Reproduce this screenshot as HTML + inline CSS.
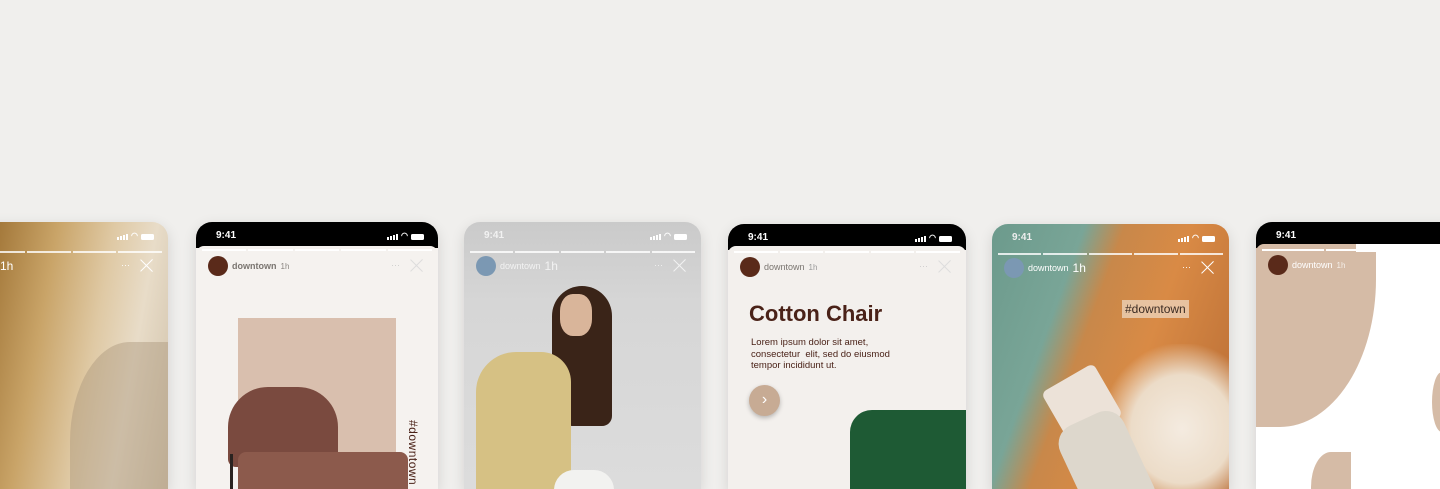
<!DOCTYPE html>
<html style="width:1440px;height:489px;overflow:hidden"><head><meta charset="utf-8"><style>
*{margin:0;padding:0;box-sizing:border-box}
body{width:1440px;height:489px;overflow:hidden;background:#f0efed;font-family:"Liberation Sans",sans-serif;position:relative}
.card{position:absolute;top:222px;height:267px;border-radius:16px 16px 0 0;overflow:hidden;box-shadow:0 4px 14px rgba(0,0,0,.12)}
.sb{position:absolute;left:0;right:0;top:0;height:25px;color:#fff;font-size:10px;font-weight:bold}
.sb .t{position:absolute;left:20px;top:8px}
.sb .ic{position:absolute;right:14px;top:9px;display:flex;gap:3px;align-items:flex-end}
.bars{display:flex;gap:1px;align-items:flex-end}.bars i{display:block;width:2px;background:#fff}
.bat{width:13px;height:6px;background:#fff;border-radius:1.5px}
.prog{position:absolute;left:6px;right:6px;top:29px;display:flex;gap:2px}.prog i{flex:1;height:1.5px;background:rgba(255,255,255,.8)}
.hdr{position:absolute;left:12px;right:14px;top:34px;height:20px;display:flex;align-items:center;font-size:9px}
.av{width:20px;height:20px;border-radius:50%;margin-right:4px}
.x{position:absolute;right:0;top:2px;width:14px;height:14px}
.x:before,.x:after{content:"";position:absolute;left:6px;top:-1px;width:1.3px;height:17px;background:currentColor;transform:rotate(45deg)}
.x:after{transform:rotate(-45deg)}
.dots{position:absolute;right:24px;top:4px;font-size:9px}
</style></head><body>

<div class="card" style="left:-70px;width:238px;background:linear-gradient(100deg,#6b4a22 0%,#a57a3c 25%,#c9a468 45%,#dfc9a4 65%,#e8dcc8 80%,#cfc0a8 100%)">
 <div style="position:absolute;left:140px;top:120px;width:120px;height:200px;background:rgba(170,150,125,.45);border-radius:50% 0 0 0"></div>
 <div class="sb"><div class="ic"><div class="bars"><i style="height:3px"></i><i style="height:4px"></i><i style="height:5px"></i><i style="height:6px"></i></div><span style="font-size:8px">◠</span><div class="bat"></div></div></div>
 <div class="prog"><i></i><i></i><i></i><i></i><i></i></div>
 <div class="hdr" style="color:#fff"><span style="margin-left:58px;font-size:12px">1h</span><span class="dots">···</span><span class="x"></span></div>
</div>

<div class="card" style="left:196px;width:242px;background:#f5f2ef">
 <div class="sb" style="background:#000;height:26px"><span class="t">9:41</span><div class="ic"><div class="bars"><i style="height:3px"></i><i style="height:4px"></i><i style="height:5px"></i><i style="height:6px"></i></div><span style="font-size:8px">◠</span><div class="bat"></div></div></div>
 <div style="position:absolute;left:0;right:0;top:24px;height:10px;background:#f5f2ef;border-radius:8px 8px 0 0"></div>
 <div class="prog" style="top:27px"><i style="background:#fff"></i><i style="background:#fff"></i><i style="background:#fff"></i><i style="background:#fff"></i><i style="background:#fff"></i></div>
 <div class="hdr" style="color:#8a8580;top:34px"><div class="av" style="background:#5a2a1a"></div><span style="font-weight:bold;color:#7a7570">downtown</span><span style="margin-left:4px;font-size:8px">1h</span><span class="dots" style="color:#ccc">···</span><span class="x" style="color:#ddd"></span></div>
 <div style="position:absolute;left:42px;top:96px;width:158px;height:200px;background:#d9bfae"></div>
 <div style="position:absolute;left:32px;top:165px;width:110px;height:80px;background:#7a4a3f;border-radius:40px 40px 8px 8px"></div>
 <div style="position:absolute;left:42px;top:230px;width:170px;height:70px;background:#8c5a4c;border-radius:8px"></div>
 <div style="position:absolute;left:34px;top:232px;width:3px;height:60px;background:#2a2320"></div>
 <div style="position:absolute;left:224px;top:198px;transform:rotate(90deg);transform-origin:left top;font-size:12px;color:#4a2218;white-space:nowrap;letter-spacing:.5px">#downtown</div>
</div>

<div class="card" style="left:464px;width:237px;background:linear-gradient(180deg,#cacaca 0%,#d6d6d6 30%,#dcdcdc 100%)">
 <div class="sb"><span class="t" style="color:#f2f2f2">9:41</span><div class="ic"><div class="bars"><i style="height:3px"></i><i style="height:4px"></i><i style="height:5px"></i><i style="height:6px"></i></div><span style="font-size:8px">◠</span><div class="bat"></div></div></div>
 <div class="prog"><i></i><i></i><i></i><i></i><i></i></div>
 <div class="hdr" style="color:#f2f2f2"><div class="av" style="background:#7b98b3"></div><span>downtown</span><span style="margin-left:4px;font-size:12px">1h</span><span class="dots">···</span><span class="x"></span></div>
 <div style="position:absolute;left:88px;top:64px;width:60px;height:140px;background:#3a2418;border-radius:30px 30px 10px 20px"></div>
 <div style="position:absolute;left:96px;top:72px;width:32px;height:42px;background:#d9b59a;border-radius:40%"></div>
 <div style="position:absolute;left:12px;top:130px;width:95px;height:170px;background:#d6c184;border-radius:40px 30px 0 0"></div>
 <div style="position:absolute;left:90px;top:248px;width:60px;height:40px;background:#f2f2f0;border-radius:20px"></div>
</div>

<div class="card" style="left:728px;top:224px;width:238px;background:#f3f0ed">
 <div class="sb" style="background:#000;height:26px"><span class="t">9:41</span><div class="ic"><div class="bars"><i style="height:3px"></i><i style="height:4px"></i><i style="height:5px"></i><i style="height:6px"></i></div><span style="font-size:8px">◠</span><div class="bat"></div></div></div>
 <div style="position:absolute;left:0;right:0;top:22px;height:10px;background:#f3f0ed;border-radius:8px 8px 0 0"></div>
 <div class="prog" style="top:27px"><i style="background:#fff"></i><i style="background:#fff"></i><i style="background:#fff"></i><i style="background:#fff"></i><i style="background:#fff"></i></div>
 <div class="hdr" style="top:33px"><div class="av" style="background:#5a2a1a"></div><span style="color:#7a7570">downtown</span><span style="margin-left:4px;font-size:8px;color:#999">1h</span><span class="dots" style="color:#ccc">···</span><span class="x" style="color:#ddd"></span></div>
 <div style="position:absolute;left:21px;top:77px;font-size:22px;font-weight:bold;color:#4a2218">Cotton Chair</div>
 <div style="position:absolute;left:23px;top:113px;font-size:9.5px;line-height:11.5px;color:#4a2218">Lorem ipsum dolor sit amet,<br>consectetur&nbsp; elit, sed do eiusmod<br>tempor incididunt ut.</div>
 <div style="position:absolute;left:21px;top:161px;width:31px;height:31px;border-radius:50%;background:#c7ab94;box-shadow:0 2px 5px rgba(0,0,0,.25);color:#fff;font-size:16px;text-align:center;line-height:30px">›</div>
 <div style="position:absolute;left:122px;top:186px;width:140px;height:120px;background:#1e5a34;border-radius:22px 0 0 0"></div>
</div>

<div class="card" style="left:992px;top:224px;width:237px;background:linear-gradient(110deg,#6c9a8c 0%,#79a597 28%,#c8884a 40%,#d98a45 60%,#c77a3c 80%,#b86a32 100%)">
 <div style="position:absolute;left:110px;top:120px;width:160px;height:170px;background:radial-gradient(ellipse at center,#f4ebe0 0%,#ecdcc8 45%,rgba(230,200,170,0) 72%)"></div>
 <div style="position:absolute;left:60px;top:150px;width:60px;height:60px;background:#ece2d8;transform:rotate(-30deg);border-radius:6px"></div>
 <div style="position:absolute;left:80px;top:190px;width:70px;height:110px;background:#ddd7cc;transform:rotate(-25deg);border-radius:20px"></div>
 <div class="sb"><span class="t" style="color:#eee">9:41</span><div class="ic"><div class="bars"><i style="height:3px"></i><i style="height:4px"></i><i style="height:5px"></i><i style="height:6px"></i></div><span style="font-size:8px">◠</span><div class="bat"></div></div></div>
 <div class="prog"><i></i><i></i><i></i><i></i><i></i></div>
 <div class="hdr" style="color:#fff"><div class="av" style="background:#7b98b3"></div><span>downtown</span><span style="margin-left:4px;font-size:12px">1h</span><span class="dots">···</span><span class="x"></span></div>
 <div style="position:absolute;left:130px;top:76px;padding:2px 3px;background:rgba(240,220,200,.7);color:#3a2a22;font-size:12px">#downtown</div>
</div>

<div class="card" style="left:1256px;width:220px;background:#fff">
 <div style="position:absolute;left:0;top:20px;width:120px;height:185px;background:#d5bba6;border-radius:0 0 80% 0"></div>
 <div style="position:absolute;left:55px;top:230px;width:40px;height:70px;background:#d5bba6;border-radius:50% 0 0 0"></div>
 <div style="position:absolute;left:176px;top:150px;width:20px;height:60px;background:#d5bba6;border-radius:50% 0 0 50%"></div>
 <div class="sb" style="background:#000;height:26px"><span class="t">9:41</span></div>
 <div style="position:absolute;left:0;top:22px;width:100%;height:8px;background:#d5bba6;border-radius:8px 0 0 0"></div>
 <div style="position:absolute;left:100px;top:22px;width:200px;height:8px;background:#fff"></div>
 <div class="prog" style="top:27px;right:auto;width:190px"><i style="background:#fff"></i><i style="background:#fff"></i><i style="background:#fff"></i></div>
 <div class="hdr" style="top:33px"><div class="av" style="background:#5a2a1a"></div><span style="color:#fff">downtown</span><span style="margin-left:4px;font-size:8px;color:#f5efe9">1h</span></div>
</div>
</body></html>
